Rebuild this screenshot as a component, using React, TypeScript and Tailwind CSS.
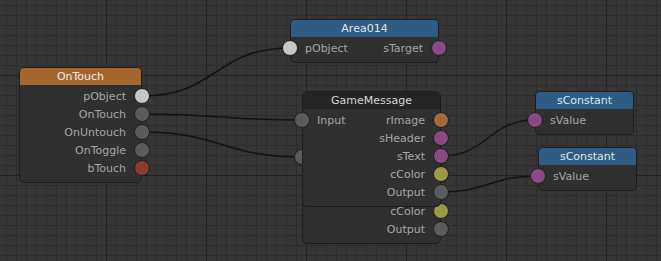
import React from "react";

type Pin = { label: string; color: string };
type Row = { left?: Pin; right?: Pin };

const PIN = {
  light: "bg-[#c6c6c6]",
  gray: "bg-[#5b5b5b]",
  red: "bg-[#8c3a2b]",
  orange: "bg-[#a4693a]",
  purple: "bg-[#8a4982]",
  olive: "bg-[#9b9a43]",
};

function PinDot({ color, side }: { color: string; side: "left" | "right" }) {
  return (
    <div
      className={
        "absolute top-[1px] w-[16px] h-[16px] rounded-full border border-[#1f1f1f] " +
        color +
        (side === "left" ? " left-[-9px]" : " right-[-9px]")
      }
    />
  );
}

function Node({
  pos,
  title,
  header,
  titleColor,
  rows,
}: {
  pos: string;
  title: string;
  header: string;
  titleColor: string;
  rows: Row[];
}) {
  return (
    <div
      className={
        "absolute rounded-[5px] border border-[#1d1d1d] bg-[#303030] font-['DejaVu_Sans',sans-serif] text-[11px] " +
        pos
      }
    >
      <div
        className={
          "h-[17px] rounded-t-[4px] flex items-center justify-center leading-none " +
          header +
          " " +
          titleColor
        }
      >
        {title}
      </div>
      <div className="pt-[2px] pb-[5px]">
        {rows.map((r, i) => (
          <div key={i} className="relative h-[18px] flex items-center justify-between pl-[14px] pr-[15px] text-[#a6a6a6] leading-none">
            <span>{r.left ? r.left.label : ""}</span>
            <span>{r.right ? r.right.label : ""}</span>
            {r.left && <PinDot color={r.left.color} side="left" />}
            {r.right && <PinDot color={r.right.color} side="right" />}
          </div>
        ))}
      </div>
    </div>
  );
}

function Background() {
  const vs: number[] = [];
  for (let x = 6; x < 661; x += 10) vs.push(x);
  const hs: number[] = [];
  for (let y = 5; y < 261; y += 10) hs.push(y);
  return (
    <svg className="absolute inset-0" width={661} height={261}>
      <rect x={0} y={0} width={661} height={261} fill="#363636" />
      {vs.map((x) => (
        <rect key={"v" + x} x={x} y={0} width={1} height={261} fill={(x - 6) % 100 === 0 && x !== 6 ? "#222222" : "#2c2c2c"} />
      ))}
      {hs.map((y) => (
        <rect key={"h" + y} x={0} y={y} width={661} height={1} fill={(y - 75) % 100 === 0 ? "#222222" : "#2c2c2c"} />
      ))}
      <g fill="none" stroke="#141414" strokeWidth={1.5}>
        <path d="M142 96 C 217 96, 215 48, 290 48" />
        <path d="M142 114 C 222 114, 222 120, 302 120" />
        <path d="M142 132 C 222 132, 222 157, 302 157" />
        <path d="M441 156 C 488 156, 488 120, 535 120" />
        <path d="M441 192 C 489 192, 489 176, 538 176" />
      </g>
    </svg>
  );
}

const gmRows: Row[] = [
  { left: { label: "Input", color: PIN.gray }, right: { label: "rImage", color: PIN.orange } },
  { right: { label: "sHeader", color: PIN.purple } },
  { right: { label: "sText", color: PIN.purple } },
  { right: { label: "cColor", color: PIN.olive } },
  { right: { label: "Output", color: PIN.gray } },
];

const gmBackRows: Row[] = [
  { left: { label: "", color: PIN.gray }, right: { label: "", color: PIN.orange } },
  { right: { label: "", color: PIN.purple } },
  { right: { label: "", color: PIN.purple } },
  { right: { label: "cColor", color: PIN.olive } },
  { right: { label: "Output", color: PIN.gray } },
];

export default function App() {
  return (
    <div className="relative w-[661px] h-[261px] overflow-hidden bg-[#363636]">
      <Background />
      <Node
        pos="left-[19px] top-[67px] w-[123px]"
        title="OnTouch"
        header="bg-[#a6672f]"
        titleColor="text-[#f2ebe4]"
        rows={[
          { right: { label: "pObject", color: PIN.light } },
          { right: { label: "OnTouch", color: PIN.gray } },
          { right: { label: "OnUntouch", color: PIN.gray } },
          { right: { label: "OnToggle", color: PIN.gray } },
          { right: { label: "bTouch", color: PIN.red } },
        ]}
      />
      <Node
        pos="left-[290px] top-[19px] w-[149px]"
        title="Area014"
        header="bg-[#2e5c85]"
        titleColor="text-[#dfe7ef]"
        rows={[
          { left: { label: "pObject", color: PIN.light }, right: { label: "sTarget", color: PIN.purple } },
        ]}
      />
      <Node
        pos="left-[302px] top-[128px] w-[139px]"
        title=""
        header="bg-[#242424]"
        titleColor="text-[#d6d6d6]"
        rows={gmBackRows}
      />
      <Node
        pos="left-[302px] top-[91px] w-[139px]"
        title="GameMessage"
        header="bg-[#242424]"
        titleColor="text-[#d6d6d6]"
        rows={gmRows}
      />
      <Node
        pos="left-[535px] top-[91px] w-[99px]"
        title="sConstant"
        header="bg-[#2e5c85]"
        titleColor="text-[#dfe7ef]"
        rows={[{ left: { label: "sValue", color: PIN.purple } }]}
      />
      <Node
        pos="left-[538px] top-[147px] w-[99px]"
        title="sConstant"
        header="bg-[#2e5c85]"
        titleColor="text-[#dfe7ef]"
        rows={[{ left: { label: "sValue", color: PIN.purple } }]}
      />
    </div>
  );
}
